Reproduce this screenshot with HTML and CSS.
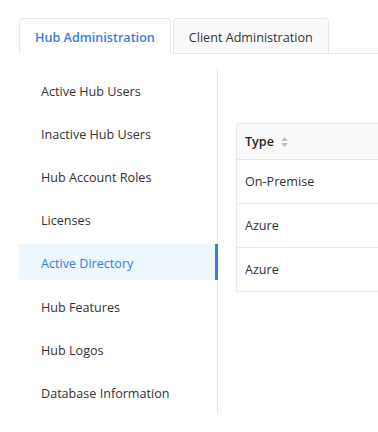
FILE: index.html
```html
<!DOCTYPE html>
<html>
<head>
<meta charset="utf-8">
<link rel="stylesheet" href="styles.css">
</head>
<body>
<div class="page">
  <div class="tabs-bar">
    <div class="tab tab-active">Hub Administration</div>
    <div class="tab">Client Administration</div>
  </div>
  <div class="main">
    <ul class="menu">
      <li class="menu-item">Active Hub Users</li>
      <li class="menu-item">Inactive Hub Users</li>
      <li class="menu-item">Hub Account Roles</li>
      <li class="menu-item">Licenses</li>
      <li class="menu-item menu-item-selected">Active Directory</li>
      <li class="menu-item">Hub Features</li>
      <li class="menu-item">Hub Logos</li>
      <li class="menu-item">Database Information</li>
    </ul>
    <div class="content">
      <div class="table">
        <div class="thead">
          <div class="th">Type
            <svg class="sorter" width="7" height="10" viewBox="0 0 7 10">
              <path d="M3.5 0 L7 4 L0 4 Z" fill="#bfbfbf"/>
              <path d="M0 6 L7 6 L3.5 10 Z" fill="#bfbfbf"/>
            </svg>
          </div>
        </div>
        <div class="tr"><div class="td">On-Premise</div></div>
        <div class="tr"><div class="td">Azure</div></div>
        <div class="tr"><div class="td">Azure</div></div>
      </div>
    </div>
  </div>
</div>
</body>
</html>
```

FILE: styles.css
```css
html, body {
  margin: 0;
  padding: 0;
  background: #ffffff;
  overflow: hidden;
}

body {
  font-family: "Open Sans", "Noto Sans", sans-serif;
  font-size: 12.6px;
  color: #3a3a3a;
}

.page {
  padding: 18px 0 0 19px;
}

.tabs-bar {
  display: flex;
  gap: 2px;
  height: 35px;
  border-bottom: 1px solid #e8e8e8;
}

.tab {
  box-sizing: border-box;
  height: 36px;
  margin-bottom: -1px;
  padding: 0 15px;
  line-height: 37px;
  border: 1px solid #e8e8e8;
  border-radius: 4px 4px 0 0;
  background: #fafafa;
  color: #333333;
  white-space: nowrap;
}

.tab-active {
  background: #ffffff;
  border-bottom-color: #ffffff;
  color: #3b7ddd;
  font-weight: 600;
}

.main {
  display: flex;
  margin-top: 14px;
}

.menu {
  list-style: none;
  margin: 0;
  padding: 3.6px 0;
  flex: none;
  width: 199px;
  box-sizing: border-box;
  border-right: 1px solid #e8e8e8;
  display: flex;
  flex-direction: column;
  gap: 7.2px;
}

.menu-item {
  position: relative;
  height: 36px;
  line-height: 39px;
  padding-left: 22px;
  width: calc(100% + 1px);
  box-sizing: border-box;
  color: #333333;
  white-space: nowrap;
}

.menu-item-selected {
  background: #eef6fe;
  color: #3b7ddd;
}

.menu-item-selected::after {
  content: "";
  position: absolute;
  top: 0;
  bottom: 0;
  right: 0;
  width: 3px;
  background: #3b7ddd;
}

.content {
  flex: 1;
  min-width: 0;
  overflow: hidden;
  padding-left: 18px;
}

.table {
  margin-top: 55px;
  width: calc(100% + 20px);
  border-top: 1px solid #e8e8e8;
  border-left: 1px solid #e8e8e8;
  border-radius: 4px 0 0 0;
}

.thead {
  height: 35px;
  background: #fafafa;
  border-bottom: 1px solid #e8e8e8;
  border-radius: 4px 0 0 0;
}

.th {
  display: flex;
  align-items: center;
  height: 35px;
  padding-left: 8px;
  font-weight: 600;
  color: #262626;
}

.sorter {
  margin-left: 7px;
}

.tr {
  height: 43px;
  border-bottom: 1px solid #e8e8e8;
}

.td {
  height: 43px;
  line-height: 43px;
  padding-left: 8px;
  color: #333333;
}
```
